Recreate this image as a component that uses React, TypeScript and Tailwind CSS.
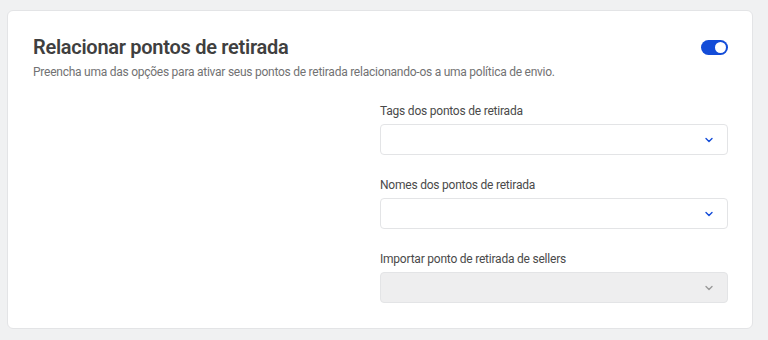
import React, { useState } from "react";

function Chevron({ color }: { color: string }) {
  return (
    <svg width="8" height="6" viewBox="0 0 8 6" fill="none">
      <path d="M1 1.5 L4 4.5 L7 1.5" stroke={color} strokeWidth="1.4" strokeLinecap="round" strokeLinejoin="round" />
    </svg>
  );
}

function SelectField({ label, disabled }: { label: string; disabled?: boolean }) {
  return (
    <div className="flex flex-col">
      <label className="text-[12px] leading-[16px] tracking-[-0.22px] text-[#4a4a4a]">{label}</label>
      <div
        className={
          disabled
            ? "mt-[5px] flex h-[31px] items-center justify-end rounded-[4px] border border-[#e3e4e6] bg-[#eeeeef] pr-[14px]"
            : "mt-[5px] flex h-[31px] items-center justify-end rounded-[4px] border border-[#e3e4e6] bg-white pr-[14px]"
        }
      >
        <Chevron color={disabled ? "#9a9a9a" : "#134cd8"} />
      </div>
    </div>
  );
}

export default function App() {
  const [enabled, setEnabled] = useState(true);

  return (
    <div className="h-[340px] w-[768px] bg-[#f0f1f2] pt-[10px] pl-[7px]" style={{ fontFamily: "Roboto, 'Noto Sans', sans-serif" }}>
      <div className="h-[319px] w-[746px] rounded-[6px] border border-[#e3e4e6] bg-white pl-[25px] pr-[24px] pt-[24px]">
        <div className="flex items-center justify-between">
          <h1 className="text-[20px] font-semibold leading-[24px] tracking-[-0.28px] text-[#3f3f40]">Relacionar pontos de retirada</h1>
          <button
            onClick={() => setEnabled(!enabled)}
            className={
              enabled
                ? "flex h-[15px] w-[27px] items-center justify-end rounded-full bg-[#134cd8] px-[2px]"
                : "flex h-[15px] w-[27px] items-center justify-start rounded-full bg-[#c4c4c4] px-[2px]"
            }
          >
            <span className="h-[11px] w-[11px] rounded-full bg-white" />
          </button>
        </div>
        <p className="mt-[5px] text-[12px] leading-[16px] tracking-[-0.25px] text-[#727273]">
          Preencha uma das opções para ativar seus pontos de retirada relacionando-os a uma política de envio.
        </p>
        <div className="mt-[23px] flex justify-end">
          <div className="flex w-[348px] flex-col gap-[22px]">
            <SelectField label="Tags dos pontos de retirada" />
            <SelectField label="Nomes dos pontos de retirada" />
            <SelectField label="Importar ponto de retirada de sellers" disabled />
          </div>
        </div>
      </div>
    </div>
  );
}
